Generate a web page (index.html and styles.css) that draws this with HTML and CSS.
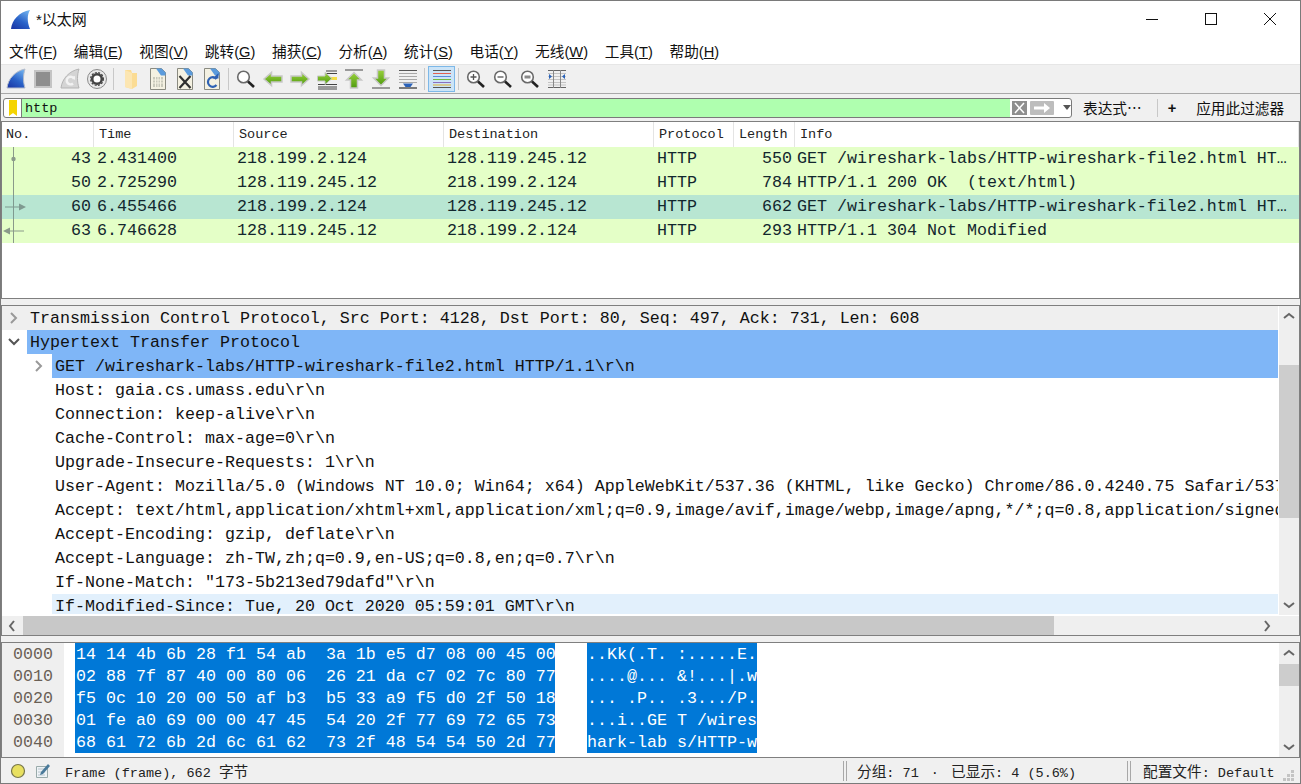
FILE: index.html
```html
<!DOCTYPE html>
<html lang="zh-CN">
<head>
  <meta charset="UTF-8">
  <title>*以太网</title>
  <link rel="stylesheet" href="styles.css">
</head>
<body>
<div class="window">
  <svg width="0" height="0" class="defs">
    <defs>
      <linearGradient id="fin" x1="0.8" y1="0" x2="0.2" y2="1">
        <stop offset="0" stop-color="#6fb0ee"/>
        <stop offset="0.55" stop-color="#2a62c8"/>
        <stop offset="1" stop-color="#1c3aa8"/>
      </linearGradient>
      <linearGradient id="greenbtn" x1="0" y1="0" x2="0" y2="1">
        <stop offset="0" stop-color="#9ad23c"/>
        <stop offset="1" stop-color="#4f9a10"/>
      </linearGradient>
      <symbol id="doc" viewBox="0 0 22 22">
        <path d="M3.500 .5h11l4 4v17h-15z" fill="#f4f1e2" stroke="#8a8a80"/>
        <path d="M9 .5h5.500l4 4v3H14z" fill="#5b9bdc"/>
      </symbol>
      <symbol id="lens" viewBox="0 0 22 22">
        <circle cx="8.500" cy="9" r="5.800" fill="#fff" stroke="#6a6a6a" stroke-width="1.600"/>
        <path d="M13 13.500l6 5.500" stroke="#222" stroke-width="2.600"/>
      </symbol>
    </defs>
  </svg>

  <header class="titlebar">
    <svg class="title-icon" width="21" height="21" viewBox="0 0 21 21">
      <path d="M1 20C2 11 9 3 20 1c-3 5-3 12 0 19z" fill="url(#fin)"/>
    </svg>
    <span class="title-text">*以太网</span>
    <div class="winbtns">
      <svg width="58" height="14" viewBox="0 0 58 14"><path d="M23 7.500h12" stroke="#111"/></svg>
      <svg width="58" height="14" viewBox="0 0 58 14"><rect x="23.500" y="1.500" width="11" height="11" fill="none" stroke="#111"/></svg>
      <svg width="58" height="14" viewBox="0 0 58 14"><path d="M23 1l12 12M35 1L23 13" stroke="#111"/></svg>
    </div>
  </header>

  <nav class="menubar">
    <span>文件(<u>F</u>)</span>
    <span>编辑(<u>E</u>)</span>
    <span>视图(<u>V</u>)</span>
    <span>跳转(<u>G</u>)</span>
    <span>捕获(<u>C</u>)</span>
    <span>分析(<u>A</u>)</span>
    <span>统计(<u>S</u>)</span>
    <span>电话(<u>Y</u>)</span>
    <span>无线(<u>W</u>)</span>
    <span>工具(<u>T</u>)</span>
    <span>帮助(<u>H</u>)</span>
  </nav>

  <div class="toolbar">
    <div class="tool"><svg width="22" height="22" viewBox="0 0 22 22"><path d="M2 20C3 11 10 3 20 1c-2 6-2 13 0 19z" fill="url(#fin)" stroke="#b4bccb"/></svg></div>
    <div class="tool"><svg width="22" height="22" viewBox="0 0 22 22"><rect x="3" y="3" width="16" height="16" fill="#8e8e8e" stroke="#c4c4c4" stroke-width="2"/></svg></div>
    <div class="tool"><svg width="22" height="22" viewBox="0 0 22 22"><path d="M2 20C3 11 10 3 20 1c-2 6-2 13 0 19z" fill="#d4d4d4" stroke="#b4b4b4"/><path d="M15 11a3.800 3.800 0 1 0-1 4.500" fill="none" stroke="#f2f2f2" stroke-width="2.400"/><path d="M12 9l4-1v4z" fill="#f2f2f2"/></svg></div>
    <div class="tool"><svg width="22" height="22" viewBox="0 0 22 22"><circle cx="11" cy="11" r="9.500" fill="#e8e8e8" stroke="#8a8a8a"/><circle cx="11" cy="11" r="4.800" fill="#fff" stroke="#444" stroke-width="2.600"/><circle cx="11" cy="11" r="6.400" fill="none" stroke="#444" stroke-width="1.200" stroke-dasharray="2 1.400"/></svg></div>
    <div class="sep"></div>
    <div class="tool"><svg width="22" height="22" viewBox="0 0 22 22"><path d="M5 2h6l1 3 5 0v13l-5 3-7-2z" fill="#fbdc94"/><path d="M5 2l7 3v16l-7-2z" fill="#fce6b2"/></svg></div>
    <div class="tool"><svg width="22" height="22" viewBox="0 0 22 22"><use href="#doc"/><path d="M6 9h10v10H6z" fill="#c9c9bb"/><path d="M8.500 9v10M11 9v10M13.500 9v10M6 12h10M6 15h10" stroke="#f4f1e2"/></svg></div>
    <div class="tool"><svg width="22" height="22" viewBox="0 0 22 22"><use href="#doc"/><path d="M5.500 8l11 12M16.500 8l-11 12" stroke="#2f2f2f" stroke-width="2.200"/></svg></div>
    <div class="tool"><svg width="22" height="22" viewBox="0 0 22 22"><use href="#doc"/><path d="M15.500 11a4.800 4.800 0 1 0 0 6" fill="none" stroke="#2f62b4" stroke-width="2.200"/><path d="M11.500 10.500h6V5z" fill="#2f62b4"/></svg></div>
    <div class="sep"></div>
    <div class="tool"><svg width="22" height="22" viewBox="0 0 22 22"><use href="#lens"/></svg></div>
    <div class="tool"><svg width="22" height="22" viewBox="0 0 22 22"><path d="M2 11l7.500-6.500V8H20v6H9.500v3.500z" fill="url(#greenbtn)" stroke="#c8c8c8" stroke-width="1.500"/></svg></div>
    <div class="tool"><svg width="22" height="22" viewBox="0 0 22 22"><path d="M20 11l-7.500-6.500V8H2v6h10.500v3.500z" fill="url(#greenbtn)" stroke="#c8c8c8" stroke-width="1.500"/></svg></div>
    <div class="tool"><svg width="22" height="22" viewBox="0 0 22 22"><path d="M10 3h11M10 5.500h11M2 16.500h19M2 19h19M2 21h19" stroke="#444"/><path d="M13 10.500h8" stroke="#f2dd44" stroke-width="3"/><path d="M16 10.500l-7-6V8H1.500v5H9v3.500z" fill="url(#greenbtn)" stroke="#c8c8c8"/></svg></div>
    <div class="tool"><svg width="22" height="22" viewBox="0 0 22 22"><path d="M2 2h18" stroke="#9a9a9a" stroke-width="2"/><path d="M11 4.500l7.500 7.500H14.500v8h-7v-8H3.500z" fill="url(#greenbtn)" stroke="#c8c8c8" stroke-width="1.500"/></svg></div>
    <div class="tool"><svg width="22" height="22" viewBox="0 0 22 22"><path d="M2 20h18" stroke="#9a9a9a" stroke-width="2"/><path d="M11 17.500l7.500-7.500H14.500V2h-7v8H3.500z" fill="url(#greenbtn)" stroke="#c8c8c8" stroke-width="1.500"/></svg></div>
    <div class="tool"><svg width="22" height="22" viewBox="0 0 22 22"><path d="M2 2.500h18" stroke="#555"/><path d="M2 5.500h18M2 8.500h18M2 11.500h18M2 14.500h18" stroke="#a8a8a8"/><path d="M2 20h18" stroke="#555" stroke-width="1.500"/><path d="M6 15.500h10l-2.500 3.500h-5z" fill="#2a62b8"/></svg></div>
    <div class="sep"></div>
    <div class="tool tool-on"><svg width="22" height="22" viewBox="0 0 22 22"><path d="M2 2.500h18M2 19.500h18" stroke="#555"/><path d="M2 5.500h18" stroke="#e06050"/><path d="M2 8.500h18" stroke="#5a8ad8"/><path d="M2 11.500h18" stroke="#70b840"/><path d="M2 14.500h18" stroke="#8a70c0"/><path d="M2 17h18" stroke="#e0b030"/></svg></div>
    <div class="sep"></div>
    <div class="tool"><svg width="22" height="22" viewBox="0 0 22 22"><use href="#lens"/><path d="M5.500 9h6M8.500 6v6" stroke="#555" stroke-width="1.300"/></svg></div>
    <div class="tool"><svg width="22" height="22" viewBox="0 0 22 22"><use href="#lens"/><path d="M5.500 9h6" stroke="#555" stroke-width="1.300"/></svg></div>
    <div class="tool"><svg width="22" height="22" viewBox="0 0 22 22"><use href="#lens"/><rect x="5.500" y="7.500" width="6" height="3" fill="#8a8a8a"/></svg></div>
    <div class="tool"><svg width="22" height="22" viewBox="0 0 22 22"><path d="M2 2.500h18M2 19.500h18" stroke="#666"/><path d="M2 5.500h18M2 8.500h18M2 11.500h18M2 14.500h18M2 17h18" stroke="#c4c4c4"/><path d="M7.500 2v18M14.500 2v18" stroke="#888"/><path d="M3 6l3 2.500L3 11zM19 6l-3 2.500 3 2.500z" fill="#2a62b8"/></svg></div>
  </div>

  <div class="filterbar">
    <div class="filter">
      <div class="bookmark"><svg width="10" height="16" viewBox="0 0 10 16"><path d="M1 0h8v16l-4-3-4 3z" fill="#f5d400"/></svg></div>
      <div class="filter-input">http</div>
      <div class="filter-btns">
        <svg width="16" height="14" viewBox="0 0 16 14"><rect width="15" height="14" fill="#8f8f8f"/><path d="M3 2l9 10M12 2L3 12" stroke="#fff" stroke-width="1.500"/></svg>
        <svg width="24" height="14" viewBox="0 0 24 14"><rect width="24" height="14" rx="1" fill="#bdbdbd"/><path d="M4 5.500h10V2l6 5-6 5V8.500H4z" fill="#fff"/></svg>
        <svg class="filter-drop" width="8" height="5" viewBox="0 0 8 5"><path d="M0 0h8L4 5z" fill="#555"/></svg>
      </div>
    </div>
    <span class="filter-expr">表达式⋯</span>
    <div class="vline"></div>
    <span class="filter-plus">+</span>
    <span class="filter-apply">应用此过滤器</span>
  </div>

  <section class="packets">
    <div class="cols cols-head">
      <div>No.</div><div>Time</div><div>Source</div><div>Destination</div><div>Protocol</div><div>Length</div><div>Info</div>
    </div>
    <div class="cols pkt">
      <div class="num"><svg width="24" height="24" viewBox="0 0 24 24"><path d="M11.500 0v24" stroke="#8a9a8a"/><circle cx="11.500" cy="12" r="2.200" fill="#8a9a8a"/></svg>43</div>
      <div>2.431400</div><div>218.199.2.124</div><div>128.119.245.12</div><div>HTTP</div><div class="len">550</div>
      <div class="info">GET /wireshark-labs/HTTP-wireshark-file2.html HT…</div>
    </div>
    <div class="cols pkt">
      <div class="num"><svg width="24" height="24" viewBox="0 0 24 24"><path d="M11.500 0v24" stroke="#8a9a8a"/></svg>50</div>
      <div>2.725290</div><div>128.119.245.12</div><div>218.199.2.124</div><div>HTTP</div><div class="len">784</div>
      <div class="info">HTTP/1.1 200 OK  (text/html)</div>
    </div>
    <div class="cols pkt pkt-sel">
      <div class="num"><svg width="24" height="24" viewBox="0 0 24 24"><path d="M11.500 0v24M3 12h15" stroke="#7f9a90"/><path d="M17 8.500l7 3.500-7 3.500z" fill="#7f9a90"/></svg>60</div>
      <div>6.455466</div><div>218.199.2.124</div><div>128.119.245.12</div><div>HTTP</div><div class="len">662</div>
      <div class="info">GET /wireshark-labs/HTTP-wireshark-file2.html HT…</div>
    </div>
    <div class="cols pkt">
      <div class="num"><svg width="24" height="24" viewBox="0 0 24 24"><path d="M11.500 0v24M8 12h14" stroke="#8a9a8a"/><path d="M8 8.500L1 12l7 3.500z" fill="#8a9a8a"/></svg>63</div>
      <div>6.746628</div><div>128.119.245.12</div><div>218.199.2.124</div><div>HTTP</div><div class="len">293</div>
      <div class="info">HTTP/1.1 304 Not Modified</div>
    </div>
  </section>

  <div class="splitter"></div>

  <section class="details">
    <div class="details-main">
      <div class="details-rows">
        <div class="row row-top"><svg class="arrow" width="10" height="12" viewBox="0 0 10 12"><path d="M2 1l5 5-5 5" fill="none" stroke="#999" stroke-width="2"/></svg><span>Transmission Control Protocol, Src Port: 4128, Dst Port: 80, Seq: 497, Ack: 731, Len: 608</span></div>
        <div class="row row-top"><svg class="arrow" width="12" height="10" viewBox="0 0 12 10"><path d="M1 2l5 5 5-5" fill="none" stroke="#555" stroke-width="2"/></svg><span class="hl">Hypertext Transfer Protocol</span></div>
        <div class="row row-sub"><svg class="arrow" width="10" height="12" viewBox="0 0 10 12"><path d="M2 1l5 5-5 5" fill="none" stroke="#999" stroke-width="2"/></svg><span class="hl">GET /wireshark-labs/HTTP-wireshark-file2.html HTTP/1.1\r\n</span></div>
        <div class="row row-leaf">Host: gaia.cs.umass.edu\r\n</div>
        <div class="row row-leaf">Connection: keep-alive\r\n</div>
        <div class="row row-leaf">Cache-Control: max-age=0\r\n</div>
        <div class="row row-leaf">Upgrade-Insecure-Requests: 1\r\n</div>
        <div class="row row-leaf">User-Agent: Mozilla/5.0 (Windows NT 10.0; Win64; x64) AppleWebKit/537.36 (KHTML, like Gecko) Chrome/86.0.4240.75 Safari/537.36\r\n</div>
        <div class="row row-leaf">Accept: text/html,application/xhtml+xml,application/xml;q=0.9,image/avif,image/webp,image/apng,*/*;q=0.8,application/signed-exchange;v=b3;q=0.9\r\n</div>
        <div class="row row-leaf">Accept-Encoding: gzip, deflate\r\n</div>
        <div class="row row-leaf">Accept-Language: zh-TW,zh;q=0.9,en-US;q=0.8,en;q=0.7\r\n</div>
        <div class="row row-leaf">If-None-Match: "173-5b213ed79dafd"\r\n</div>
        <div class="row row-last"><span class="hover">If-Modified-Since: Tue, 20 Oct 2020 05:59:01 GMT\r\n</span></div>
      </div>
      <div class="vscroll">
        <svg width="12" height="8" viewBox="0 0 12 8"><path d="M1 6l5-4 5 4" fill="none" stroke="#666" stroke-width="2"/></svg>
        <div class="vtrack vtrack-details"><div class="vthumb"></div></div>
        <svg width="12" height="8" viewBox="0 0 12 8"><path d="M1 2l5 4 5-4" fill="none" stroke="#666" stroke-width="2"/></svg>
      </div>
    </div>
    <div class="hscroll">
      <svg width="8" height="12" viewBox="0 0 8 12"><path d="M6 1L2 6l4 5" fill="none" stroke="#666" stroke-width="2"/></svg>
      <div class="htrack"><div class="hthumb"></div></div>
      <svg width="8" height="12" viewBox="0 0 8 12"><path d="M2 1l4 5-4 5" fill="none" stroke="#666" stroke-width="2"/></svg>
    </div>
  </section>

  <div class="splitter"></div>

  <section class="hex">
    <div class="hex-rows">
      <div class="hexrow"><span class="off">0000</span><span class="bytes">14 14 4b 6b 28 f1 54 ab  3a 1b e5 d7 08 00 45 00</span><span class="ascii">..Kk(.T. :.....E.</span></div>
      <div class="hexrow"><span class="off">0010</span><span class="bytes">02 88 7f 87 40 00 80 06  26 21 da c7 02 7c 80 77</span><span class="ascii">....@... &amp;!...|.w</span></div>
      <div class="hexrow"><span class="off">0020</span><span class="bytes">f5 0c 10 20 00 50 af b3  b5 33 a9 f5 d0 2f 50 18</span><span class="ascii">... .P.. .3.../P.</span></div>
      <div class="hexrow"><span class="off">0030</span><span class="bytes">01 fe a0 69 00 00 47 45  54 20 2f 77 69 72 65 73</span><span class="ascii">...i..GE T /wires</span></div>
      <div class="hexrow"><span class="off">0040</span><span class="bytes">68 61 72 6b 2d 6c 61 62  73 2f 48 54 54 50 2d 77</span><span class="ascii">hark-lab s/HTTP-w</span></div>
    </div>
    <div class="vscroll">
      <svg width="12" height="8" viewBox="0 0 12 8"><path d="M1 6l5-4 5 4" fill="none" stroke="#666" stroke-width="2"/></svg>
      <div class="vtrack vtrack-hex"><div class="vthumb"></div></div>
      <svg width="12" height="8" viewBox="0 0 12 8"><path d="M1 2l5 4 5-4" fill="none" stroke="#666" stroke-width="2"/></svg>
    </div>
  </section>

  <footer class="statusbar">
    <svg class="led" width="16" height="16" viewBox="0 0 16 16"><circle cx="8" cy="8" r="6.500" fill="#e8e060" stroke="#77764a" stroke-width="1.200"/></svg>
    <svg class="edit" width="16" height="16" viewBox="0 0 16 16"><path d="M1.500 3.500h11v11h-11z" fill="#eef3f6" stroke="#9aa"/><path d="M3 6h7M3 9h7M3 12h7" stroke="#b8c4cc"/><path d="M6 9l7-8 2 2-7 8-3 1z" fill="#4a7a9a"/></svg>
    <span class="st-frame">Frame (frame), 662 <span class="cjk">字节</span></span>
    <div class="dbl"></div>
    <span class="st-stats"><span class="cjk">分组</span>: 71 <span class="dot">·</span> <span class="cjk">已显示</span>: 4 (5.6%)</span>
    <div class="dbl"></div>
    <span class="st-profile"><span class="cjk">配置文件</span>: Default</span>
    <svg class="grip" width="12" height="12" viewBox="0 0 12 12"><path d="M8 0h3v3H8zM4 4h3v3H4zM8 4h3v3H8zM0 8h3v3H0zM4 8h3v3H4zM8 8h3v3H8z" fill="#c4c4c4"/></svg>
  </footer>
</div>
</body>
</html>
```

FILE: styles.css
```css
* {
  box-sizing: border-box;
}
html, body {
  margin: 0;
  padding: 0;
  overflow: hidden;
}
body {
  background: #fff;
  color: #111;
  font-family: "Liberation Sans", "Noto Sans CJK SC", sans-serif;
  font-size: 14.67px;
}
.defs {
  display: block;
  height: 0;
}
.window {
  width: 1301px;
  height: 784px;
  border: 1px solid #7a7a7a;
  display: flex;
  flex-direction: column;
  overflow: hidden;
}

/* title + menu */
.titlebar {
  height: 37px;
  display: flex;
  align-items: center;
  padding-left: 9px;
  background: #fff;
  flex: none;
}
.title-text {
  margin-left: 5px;
  font-size: 15px;
  margin-top: -2px;
}
.winbtns {
  margin-left: auto;
  margin-right: 1px;
  display: flex;
  gap: 1px;
  margin-top: -1px;
}
.menubar {
  height: 26px;
  display: flex;
  align-items: center;
  gap: 16.7px;
  padding-left: 8px;
  padding-bottom: 2px;
  background: #fff;
  flex: none;
}

/* toolbar */
.toolbar {
  height: 30px;
  display: flex;
  align-items: center;
  padding-left: 1px;
  background: #f0f0f0;
  border-top: 1px solid #e6e6e6;
  border-bottom: 1px solid #a8a8a8;
  flex: none;
}
.tool {
  width: 27px;
  height: 26px;
  display: flex;
  align-items: center;
  justify-content: center;
  border: 1px solid transparent;
}
.tool-on {
  background: #cce4f7;
  border-color: #7db8e8;
}
.sep {
  width: 1px;
  height: 22px;
  margin: 0 3px;
  background: #c8c8c8;
}

/* display filter */
.filterbar {
  height: 28px;
  display: flex;
  align-items: center;
  padding-left: 2px;
  background: #f0f0f0;
  border-bottom: 1px solid #7f7f7f;
  flex: none;
}
.filter {
  width: 1069px;
  height: 20px;
  display: flex;
  border: 1px solid #7a7a7a;
  border-radius: 3px;
  background: #fff;
}
.bookmark {
  width: 18px;
  display: flex;
  align-items: center;
  justify-content: center;
  border-right: 1px solid #7a7a7a;
}
.filter-input {
  flex: 1;
  background: #afffaf;
  font-family: "Liberation Mono", monospace;
  font-size: 13.5px;
  line-height: 20px;
  padding-left: 3px;
}
.filter-btns {
  width: 61px;
  display: flex;
  align-items: center;
  gap: 2px;
  padding-left: 2px;
}
.filter-drop {
  margin-left: 7px;
}
.filter-expr {
  margin-left: 11px;
}
.vline {
  width: 1px;
  height: 18px;
  margin-left: 15px;
  background: #c8c8c8;
}
.filter-plus {
  margin-left: 10px;
  font-weight: bold;
}
.filter-apply {
  margin-left: 20px;
}

/* packet list */
.packets {
  height: 176px;
  background: #fff;
  border-left: 1px solid #7f7f7f;
  border-right: 1px solid #7f7f7f;
  font-family: "Liberation Mono", monospace;
  flex: none;
  overflow: hidden;
}
.cols {
  display: grid;
  grid-template-columns: 92px 140px 210px 210px 80px 61px 1fr;
  white-space: pre;
}
.cols-head {
  height: 25px;
  font-size: 13.5px;
  line-height: 26px;
  color: #222;
}
.cols-head div {
  padding-left: 5px;
  border-right: 1px solid #e4e4e4;
  overflow: hidden;
}
.cols-head div:first-child {
  padding-left: 4px;
}
.pkt {
  height: 24px;
  line-height: 24px;
  font-size: 16.67px;
  background: #e4ffc7;
  color: #12272e;
}
.pkt-sel {
  background: #b8e6d2;
}
.pkt div {
  padding-left: 3px;
  overflow: hidden;
}
.pkt .num {
  display: flex;
  justify-content: space-between;
  padding-left: 0;
  padding-right: 3px;
}
.pkt .len {
  text-align: right;
  padding-right: 3px;
}
.pkt .info {
  padding-left: 2px;
}

.splitter {
  height: 8px;
  background: #f0f0f0;
  border-top: 1px solid #7f7f7f;
  border-bottom: 1px solid #7f7f7f;
  flex: none;
}

/* packet details */
.details {
  height: 329px;
  display: flex;
  flex-direction: column;
  flex: none;
  border-left: 1px solid #7f7f7f;
  border-right: 1px solid #7f7f7f;
  font-family: "Liberation Mono", monospace;
  font-size: 16.67px;
}
.details-main {
  display: flex;
  height: 309px;
}
.details-rows {
  width: 1276px;
  overflow: hidden;
}
.row {
  height: 24px;
  line-height: 26px;
  display: flex;
  align-items: center;
  white-space: pre;
  overflow: hidden;
  color: #111;
}
.row-top:first-child {
  background: #efefef;
}
.row-top .arrow {
  margin-left: 6px;
  width: 12px;
  margin-right: 7px;
}
.row-top span {
  align-self: stretch;
  padding-left: 3px;
}
.row-sub .arrow {
  margin-left: 32px;
  margin-right: 8px;
}
.hl {
  background: #7fb6f7;
  flex: 1;
  height: 24px;
  padding-left: 3px;
}
.row-leaf {
  display: block;
  padding-left: 53px;
}
.row-last {
  padding-left: 50px;
  height: 20px;
  align-items: flex-start;
}
.hover {
  flex: 1;
  height: 20px;
  background: #e2f0fc;
  padding-left: 3px;
}
.vscroll {
  width: 21px;
  display: flex;
  flex-direction: column;
  align-items: center;
  background: #efefef;
  border-left: 1px solid #fff;
  padding-top: 6px;
  padding-bottom: 6px;
  flex: none;
}
.vtrack {
  flex: 1;
  width: 100%;
  margin-top: 6px;
  margin-bottom: 6px;
}
.vthumb {
  background: #cdcdcd;
  height: 22px;
}
.vtrack-details {
  padding-top: 39px;
}
.vtrack-details .vthumb {
  height: 153px;
}
.vtrack-hex {
  padding-top: 1px;
}
.hscroll {
  height: 20px;
  display: flex;
  align-items: center;
  background: #efefef;
  border-top: 1px solid #fff;
  padding-left: 6px;
  padding-right: 28px;
}
.htrack {
  flex: 1;
  height: 100%;
}
.hthumb {
  width: 1031px;
  height: 100%;
  margin-left: 7px;
  background: #c8c8c8;
}

/* packet bytes */
.hex {
  height: 114px;
  display: flex;
  flex: none;
  border-left: 1px solid #7f7f7f;
  border-right: 1px solid #7f7f7f;
  font-family: "Liberation Mono", monospace;
  font-size: 16.67px;
}
.hex-rows {
  flex: 1;
  background: linear-gradient(to right, #efefef 62px, #fff 62px);
}
.hexrow {
  height: 22px;
  line-height: 24px;
  display: flex;
  white-space: pre;
}
.off {
  width: 73px;
  padding-left: 11px;
  color: #6a5f55;
}
.bytes, .ascii {
  background: #0078d7;
  color: #fff;
}
.bytes {
  width: 480px;
  padding-left: 1px;
}
.ascii {
  width: 170px;
  margin-left: 32px;
}

/* status bar */
.statusbar {
  height: 26px;
  display: flex;
  align-items: center;
  background: #f0f0f0;
  border-top: 1px solid #7f7f7f;
  font-family: "Liberation Mono", "Noto Sans CJK SC", monospace;
  font-size: 13.5px;
  color: #222;
  flex: none;
}
.cjk {
  font-size: 14.67px;
}
.dot {
  margin: 0 4px;
}
.led {
  margin-left: 9px;
}
.edit {
  margin-left: 9px;
}
.st-frame {
  margin-left: 14px;
  width: 778px;
}
.dbl {
  width: 4px;
  height: 20px;
  border-left: 1px solid #a8a8a8;
  border-right: 1px solid #a8a8a8;
}
.st-stats {
  margin-left: 10px;
  width: 270px;
}
.st-profile {
  margin-left: 12px;
  white-space: pre;
}
.grip {
  margin-left: auto;
  margin-right: 5px;
  margin-top: 10px;
}
```
